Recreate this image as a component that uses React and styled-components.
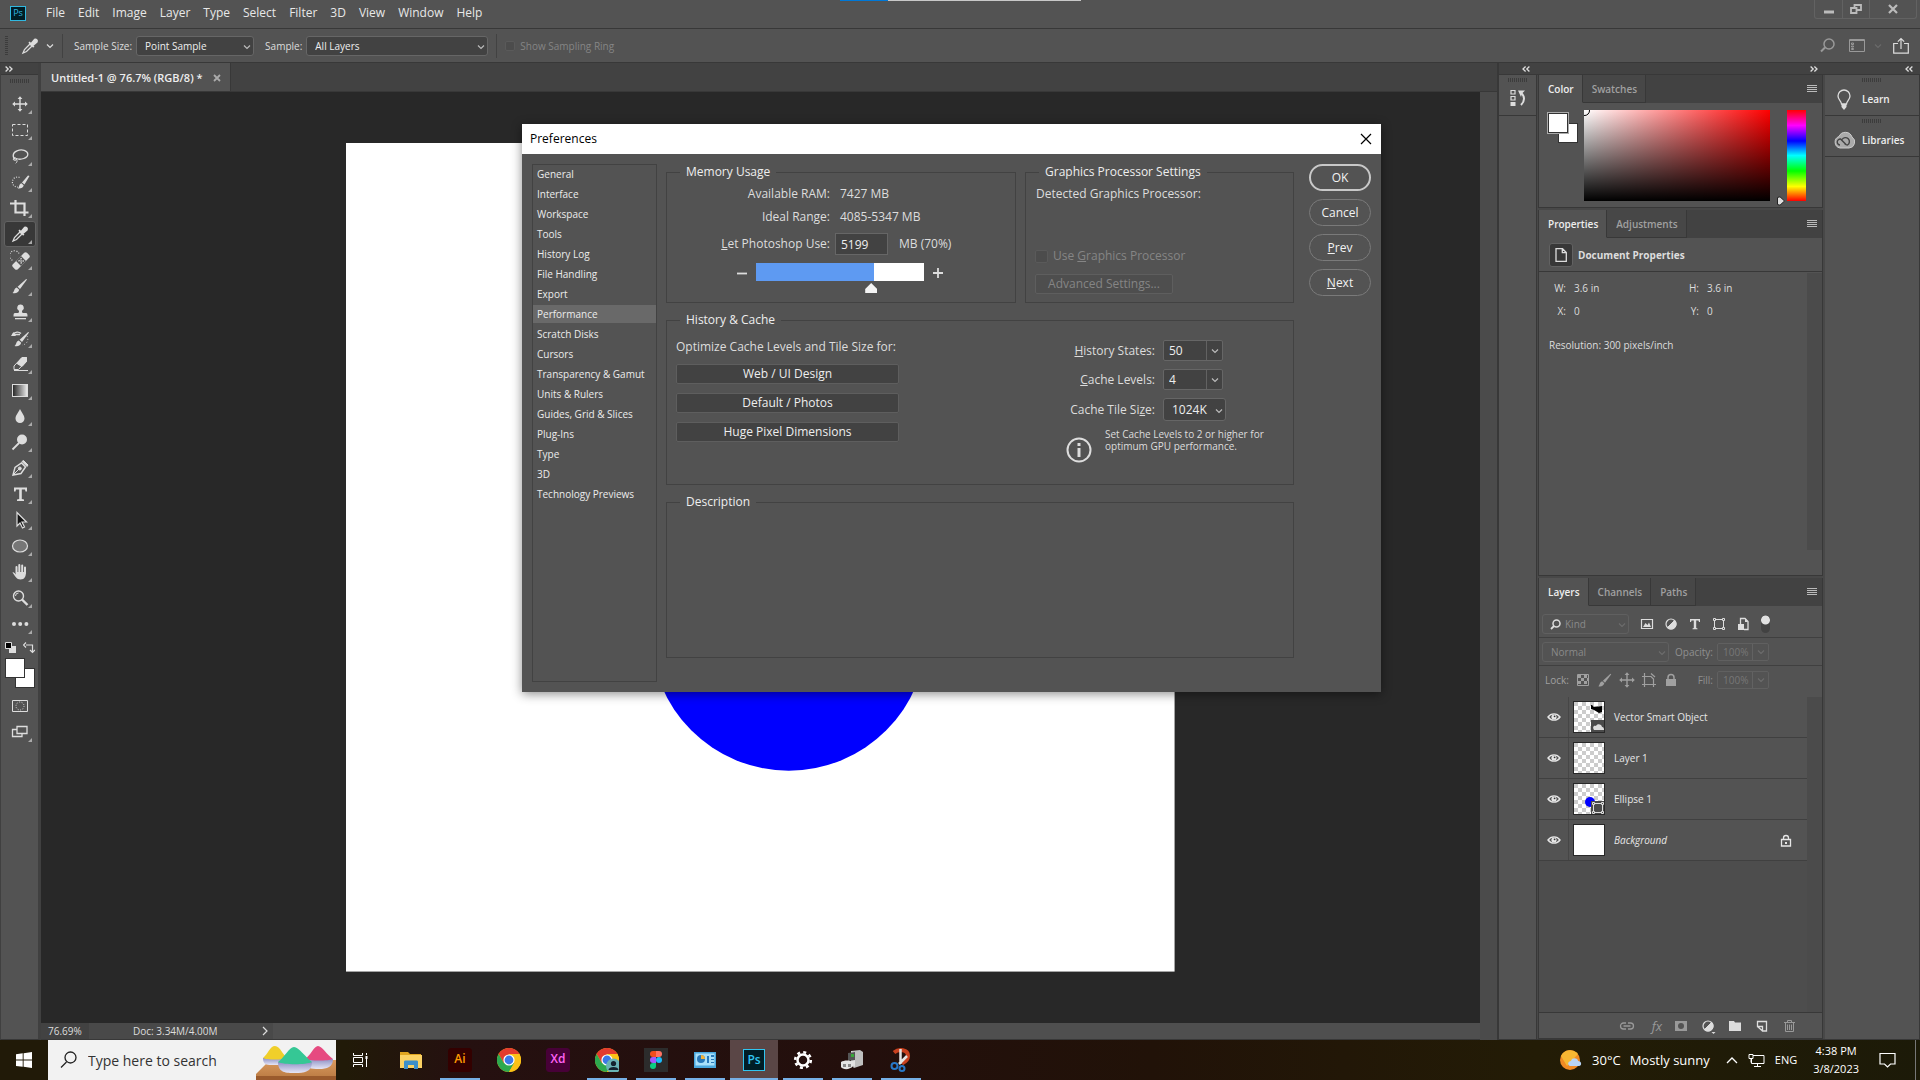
import React from "react";
import styled, { createGlobalStyle } from "styled-components";

const menus = ["File", "Edit", "Image", "Layer", "Type", "Select", "Filter", "3D", "View", "Window", "Help"];

const sections = [
  "General",
  "Interface",
  "Workspace",
  "Tools",
  "History Log",
  "File Handling",
  "Export",
  "Performance",
  "Scratch Disks",
  "Cursors",
  "Transparency & Gamut",
  "Units & Rulers",
  "Guides, Grid & Slices",
  "Plug-Ins",
  "Type",
  "3D",
  "Technology Previews",
];

const ram = 7427;

/* ---------- icons ---------- */

const Icon = ({ w = 20, h, box, children, label }) => (
  <svg
    width={w}
    height={h || w}
    viewBox={box || `0 0 ${w} ${h || w}`}
    fill="none"
    stroke="currentColor"
    aria-label={label}
    aria-hidden={label ? undefined : true}
  >
    {children}
  </svg>
);

const Chevron = () => (
  <Icon w={8} h={6}>
    <path d="M1 1.500 4 4.500 7 1.500" strokeWidth="1.200" />
  </Icon>
);

const Arrows = ({ left }) => (
  <Icon w={8} h={6}>
    {left ? (
      <path d="M3.600 .5 1 3 3.600 5.500M7.400 .5 4.800 3 7.400 5.500" strokeWidth="1.300" />
    ) : (
      <path d="M.6 .5 3.200 3 .6 5.500M4.400 .5 7 3 4.400 5.500" strokeWidth="1.300" />
    )}
  </Icon>
);

const Lines = () => (
  <Icon w={10} h={8}>
    <path d="M0 .5h10M0 2.500h10M0 4.500h10M0 6.500h10" />
  </Icon>
);

const Dropper = () => (
  <>
    <path d="M3 17 4.500 13.500 10 8l2 2-5.500 5.500z" strokeWidth="1.300" />
    <path d="M9 6.200 13.800 11M11 8l3.600-4.400a1.700 1.700 0 0 1 2.200 2.400L12.500 9.500" fill="currentColor" strokeWidth="1.800" />
  </>
);

const BrushPath = () => (
  <g fill="currentColor" stroke="none">
    <path d="M17 3.500 10 13 7.600 10.800 16.200 3z" />
    <path d="M6.800 11.500 9.200 13.700c-.6 2.800-3.200 4-6.700 3.300 2-1.200 1.300-4.600 4.300-5.500z" />
  </g>
);

const MovePath = () => (
  <>
    <path d="M10 4v12M4 10h12" strokeWidth="1.400" />
    <path d="M10 2.200 7.600 5h4.800zM10 17.800 7.600 15h4.800zM2.200 10 5 7.600v4.800zM17.800 10 15 7.600v4.800z" fill="currentColor" stroke="none" />
  </>
);

const ShapePath = () => (
  <>
    <path d="M5 3.500h6M5 12.500h6M3.500 5v6M12.500 5v6" />
    <path d="M2.500 2.500h2v2h-2zM11.500 2.500h2v2h-2zM2.500 11.500h2v2h-2zM11.500 11.500h2v2h-2z" />
  </>
);

const HalfCircle = () => (
  <>
    <circle cx="8" cy="8" r="5" strokeWidth="1.200" />
    <path d="M11.600 4.400A5 5 0 0 1 4.400 11.600z" fill="currentColor" />
  </>
);

const tools = [
  ["Move", <MovePath />],
  ["Marquee", <path d="M2.500 4.500h15v11h-15z" strokeDasharray="3 2" />],
  [
    "Lasso",
    <>
      <path d="M5.500 13.500C2 11 2.500 6.500 7 4.800c5-2 10.500-.3 10.800 3.200.3 4-7 6.500-11.800 4.500" strokeWidth="1.300" />
      <path d="M3 12.500c1.500-1.500 4-.5 3.500 1S3 14.500 3.200 13M6.500 13.500c1.200 1.500.2 3-.8 3.800" />
    </>,
  ],
  [
    "Quick Selection",
    <>
      <path d="M9.500 5.500A5 5 0 1 0 8 15" strokeDasharray="1 1.500" strokeWidth="1.200" />
      <path d="M19.500 4 14.500 12.500 12 10.500 18 3.500zM11.300 11.200l2.400 2.100c-.5 2.500-3 3.700-6 3.200 1.800-1 1.100-4.400 3.600-5.300z" fill="currentColor" stroke="none" />
    </>,
  ],
  ["Crop", <path d="M0 5.500h14.500V18M5.500 2v12.500H18.500" strokeWidth="2.200" />],
  ["Eyedropper", <Dropper />],
  [
    "Healing Brush",
    <>
      <path d="M9 3.500A5 5 0 1 0 3 10.500" strokeDasharray="1 1.500" strokeWidth="1.200" />
      <g transform="rotate(-45 11 11)">
        <rect x="1" y="7.500" width="20" height="7" rx="2" fill="currentColor" stroke="none" />
        <rect x="7.500" y="7.500" width="7" height="7" fill="#535353" stroke="none" />
        <path d="M9 9.500h1.500M11.800 9.500h1.500M9 12.500h1.500M11.800 12.500h1.500M10.300 11h1.500" strokeWidth="1.300" />
      </g>
    </>,
  ],
  ["Brush", <BrushPath />],
  [
    "Clone Stamp",
    <g fill="currentColor" stroke="none">
      <path d="M10.500 2.500a3.200 3.200 0 0 1 2 5.800c-.8.800-.7 2 .2 2.700h3.300c1.200 0 1.500.8 1.500 3.500h-14c0-2.700.3-3.500 1.500-3.500h3.300c.9-.7 1-1.900.2-2.700a3.200 3.200 0 0 1 2-5.800z" />
      <path d="M5 16h11v1.300H5z" />
    </g>,
  ],
  [
    "History Brush",
    <>
      <g transform="translate(2 1)">
        <BrushPath />
      </g>
      <path d="M2 6.500h8M3 6.500C5 3.500 9 3.500 11 5.500" strokeWidth="1.300" />
      <path d="M1 8 3.500 4 6 8z" fill="currentColor" stroke="none" />
      <path d="M17 8a6 6 0 0 1-5 9" strokeDasharray="1 2" />
    </>,
  ],
  [
    "Eraser",
    <>
      <path d="m4 12 8-8.500h4.500v3.500l-8 8.500H4z" />
      <path d="m7 9.500 5-6h4.500v4L12 12.500z" fill="currentColor" />
      <path d="M4 16.500h14" />
    </>,
  ],
  [
    "Gradient",
    <>
      <defs>
        <linearGradient id="toolGradient">
          <stop offset="0" stopColor="#222" />
          <stop offset="1" stopColor="#eee" />
        </linearGradient>
      </defs>
      <rect x="2.500" y="4.500" width="15" height="12" fill="url(#toolGradient)" />
    </>,
  ],
  ["Blur", <path d="M10 3c2 4 4.500 6.500 4.500 9.500a4.500 4.500 0 0 1-9 0C5.500 9.500 8 7 10 3z" fill="currentColor" stroke="none" />],
  [
    "Dodge",
    <>
      <circle cx="12" cy="7.500" r="5" fill="currentColor" stroke="none" />
      <path d="M9 11 2.500 17.500" strokeWidth="1.800" />
    </>,
  ],
  [
    "Pen",
    <>
      <path d="M3 17 5 9.500 11.500 5l4 4L11 15.500z" strokeWidth="1.400" />
      <path d="m3 17 6.500-6.500" />
      <circle cx="9.800" cy="10.500" r="1.500" fill="currentColor" />
      <path d="m12 3.500 5 5 1-1.500-4.500-4.500z" fill="currentColor" />
    </>,
  ],
  [
    "Type",
    <path d="M4 3.500h13v4h-1.500l-.5-2h-3.200v9.500l2.200.5V17H7v-1.500l2.200-.5V5.500H6l-.5 2H4z" fill="currentColor" stroke="none" />,
  ],
  ["Path Selection", <path d="M7 2.500v13.500l3-3 2.500 5 2-1-2.500-5h4.500z" fill="#151515" strokeWidth="1.200" />],
  ["Ellipse", <ellipse cx="10" cy="10" rx="7.500" ry="6" fill="#777" strokeWidth="1.200" />],
  [
    "Hand",
    <g strokeLinecap="round">
      <path d="M6.500 11V5M9.300 10V3M12.200 10V3.500M15 11V5.500" strokeWidth="2" />
      <path d="M2.500 10.500c1-.8 2 .2 3.500 2V10h10c0 4-1.200 7.500-5.500 7.500-4 0-5.500-3.500-8-7z" fill="currentColor" stroke="none" />
    </g>,
  ],
  [
    "Zoom",
    <>
      <circle cx="8.500" cy="8" r="5" strokeWidth="1.400" />
      <path d="M5.500 8a3 3 0 0 1 3-3" />
      <path d="m12 11.500 5.500 5.500" strokeWidth="2.400" />
    </>,
  ],
  [
    "More",
    <g fill="currentColor" stroke="none">
      <circle cx="4" cy="10" r="2" />
      <circle cx="10.200" cy="10" r="2" />
      <circle cx="16.400" cy="10" r="2" />
    </g>,
  ],
];

const Chrome = () => (
  <g stroke="none">
    <circle cx="12" cy="12" r="12" fill="#fbc116" />
    <path d="M1.600 6A12 12 0 0 1 22.400 6H12l-5.200 9z" fill="#e33b2e" />
    <path d="M1.600 6A12 12 0 0 0 12 24l5.200-9H6.800z" fill="#2da94f" />
    <path d="M22.400 6H12v6l5.200 3L12 24A12 12 0 0 0 22.400 6z" fill="#fbc116" />
    <circle cx="12" cy="12" r="5.600" fill="#fff" />
    <circle cx="12" cy="12" r="4.400" fill="#3b78e7" />
  </g>
);

const tasks = [
  {
    name: "File Explorer",
    art: (
      <g stroke="none">
        <path d="M1 4h8l2 2h11v14H1z" fill="#e0a520" />
        <path d="M1 7h22v13H1z" fill="#fbd264" />
        <path d="M5 14c0-1 .5-1.500 1.500-1.500h11c1 0 1.500.5 1.500 1.500v7h-4v-4H9v4H5z" fill="#3d8fc9" />
      </g>
    ),
  },
  { name: "Illustrator", open: true, tile: "Ai", bg: "#330000", fg: "#ff9a00" },
  { name: "Chrome", art: <Chrome /> },
  { name: "XD", tile: "Xd", bg: "#470137", fg: "#ff61f6" },
  {
    name: "Chrome profile",
    open: true,
    art: (
      <>
        <Chrome />
        <g stroke="none">
          <circle cx="18.500" cy="18" r="7.500" fill="#69b3b5" />
          <circle cx="18.500" cy="15.500" r="2.600" fill="#14232e" />
          <path d="M13.500 22c0-4 10-4 10 0z" fill="#14232e" />
        </g>
      </>
    ),
  },
  {
    name: "Figma",
    open: true,
    art: (
      <g stroke="none">
        <path d="M0 0h24v24H0z" fill="#2c2c2c" />
        <path d="M12 3H9a3 3 0 0 0 0 6h3z" fill="#f24e1e" />
        <path d="M12 3h3a3 3 0 0 1 0 6h-3z" fill="#ff7262" />
        <path d="M12 9H9a3 3 0 0 0 0 6h3z" fill="#a259ff" />
        <circle cx="15" cy="12" r="3" fill="#1abcfe" />
        <path d="M12 15H9a3 3 0 1 0 3 3z" fill="#0acf83" />
      </g>
    ),
  },
  {
    name: "Control Panel",
    open: true,
    art: (
      <g stroke="none">
        <path d="M1 4h22v16H1z" fill="#4aa8de" />
        <path d="M2.500 5.500h19v12h-19z" fill="#a8e0fa" />
        <circle cx="8" cy="11" r="4" fill="#2878b8" />
        <path d="M8 11V7a4 4 0 0 1 4 4z" fill="#f4b43a" />
        <path d="M14 8h2v7h-2zM18 7h3v2h-3zM18 11h3v1h-3zM18 14h3v1h-3z" fill="#2878b8" />
      </g>
    ),
  },
  { name: "Photoshop", open: true, active: true, tile: "Ps", bg: "#001d26", fg: "#31c5f0", framed: true },
  {
    name: "Settings",
    open: true,
    art: (
      <g stroke="#fff">
        <circle cx="12" cy="12" r="5.500" strokeWidth="2.500" />
        <circle cx="12" cy="12" r="7.800" strokeWidth="2.600" strokeDasharray="3 3.126" />
      </g>
    ),
  },
  {
    name: "Device",
    open: true,
    art: (
      <g stroke="none">
        <path d="m11 3 9-1 3 2v13l-9 3-3-3z" fill="#bfbfbf" />
        <path d="m11 3 4 2v14l-4-3z" fill="#e2e2e2" />
        <path d="m8 5 7-1v8l-7 1z" fill="#555" />
        <path d="M11 6h3v3h-3z" fill="#38a838" />
        <path d="M1 14c3-2 9-2 12 0v4c-3 4-10 4-12 1z" fill="#e4e4e4" />
        <path d="M3 16h3v3H3zM8 16h3v3H8z" fill="#888" />
      </g>
    ),
  },
  {
    name: "Snipping Tool",
    open: true,
    art: (
      <>
        <path d="M5 4.500c5-4 14-3 14 3.500 0 4-3 6-6 7.500" stroke="#c8411f" strokeWidth="4" />
        <path d="M11.500 1v15M18 8l-8 8" stroke="#e4e4e4" strokeWidth="2.500" />
        <circle cx="5.500" cy="18" r="3" stroke="#2878c8" strokeWidth="2" />
        <circle cx="13" cy="20.500" r="2.500" stroke="#2878c8" strokeWidth="2" />
      </>
    ),
  },
];

const PsLogo = () => (
  <PsTile $bg="#001d26" $fg="#31b8e0">
    Ps
  </PsTile>
);

const Eye = () => (
  <Icon w={14} h={10}>
    <path d="M1 5C4 .8 10 .8 13 5 10 9.200 4 9.200 1 5z" strokeWidth="1.400" />
    <circle cx="7" cy="5" r="2.600" fill="currentColor" stroke="none" />
    <circle cx="7.600" cy="4.300" r=".9" fill="#333" stroke="none" />
  </Icon>
);

const layers = [
  {
    name: "Vector Smart Object",
    art: (
      <>
        <path d="M17 3h1l2 2 8-1v6l-3 1-5-3-3-1z" fill="#000" stroke="none" />
        <path d="M17 18h13v12H17z" fill="#4a4a4a" stroke="none" />
        <path d="M20 28c-2-3 0-5 2-4 1-3 6-2 6 1 2 0 2 2 2 3z" fill="#ddd" stroke="none" />
      </>
    ),
  },
  { name: "Layer 1" },
  {
    name: "Ellipse 1",
    art: (
      <>
        <circle cx="16" cy="18" r="5" fill="#00f" stroke="none" />
        <path d="M17 17h13v13H17z" fill="#4a4a4a" stroke="none" />
        <g transform="translate(16 16)" stroke="#ddd">
          <ShapePath />
        </g>
      </>
    ),
  },
  { name: "Background", plain: true },
];

/* ---------- parts ---------- */

function DropDown({ label, children, width, height, dim, hint, flat, pad }) {
  return (
    <SelectWrap $width={width} $height={height} $dim={dim} $flat={flat} $pad={pad}>
      {hint}
      <select aria-label={label} disabled={dim}>
        <option>{children}</option>
      </select>
      <Chevron />
    </SelectWrap>
  );
}

function TopBars() {
  return (
    <>
      <MenuBar>
        <PsLogo />
        <MenuList>
          {menus.map((m) => (
            <button key={m}>{m}</button>
          ))}
        </MenuList>
        <Notch />
        <WindowButtons>
          <button aria-label="Minimize">
            <Icon w={10} h={10}>
              <path d="M0 8h10" strokeWidth="3" />
            </Icon>
          </button>
          <button aria-label="Restore">
            <Icon w={12} h={10}>
              <path d="M4.500 5V1h6.500v5H7M1 4h5.500v5H1z" strokeWidth="1.800" />
            </Icon>
          </button>
          <button aria-label="Close">
            <Icon w={10} h={10}>
              <path d="m1 1 8 8M9 1 1 9" strokeWidth="2.200" />
            </Icon>
          </button>
        </WindowButtons>
      </MenuBar>
      <OptionsBar>
        <Grip $vertical />
        <OptionTool aria-label="Eyedropper options">
          <Icon>
            <Dropper />
          </Icon>
          <Chevron />
        </OptionTool>
        <OptionSet>
          <span>Sample Size:</span>
          <DropDown label="Sample Size" width="118px">
            Point Sample
          </DropDown>
        </OptionSet>
        <OptionSet>
          <span>Sample:</span>
          <DropDown label="Sample" width="182px">
            All Layers
          </DropDown>
        </OptionSet>
        <RingLabel>
          <input type="checkbox" disabled />
          Show Sampling Ring
        </RingLabel>
        <OptionActions>
          <Icon w={15}>
            <circle cx="9" cy="6" r="5" strokeWidth="1.500" />
            <path d="m5 9.500-4 4" strokeWidth="2" />
          </Icon>
          <Icon w={16} h={13}>
            <path d="M.5 .5h15v12H.5z" />
            <path d="M0 1.500h16M2.500 4h2v1.500h-2zM2.500 7h2v1h-2zM2.500 9.500h2v1h-2z" />
          </Icon>
          <Faint>
            <Chevron />
          </Faint>
          <Bright>
            <Icon w={16} h={17}>
              <path d="M5 6.500H.7v9.700h14.600V6.500H11M8 12V1.500M4.800 4.700 8 1.500l3.200 3.200" strokeWidth="1.200" />
            </Icon>
          </Bright>
        </OptionActions>
      </OptionsBar>
    </>
  );
}

function ToolBar() {
  return (
    <ToolColumn>
      <Strip $start>
        <Arrows />
      </Strip>
      <Grip />
      <ToolList>
        {tools.map(([name, art]) => (
          <Tool key={name} aria-label={name} $active={name === "Eyedropper"}>
            <Icon>{art}</Icon>
          </Tool>
        ))}
      </ToolList>
      <MiniRow>
        <Icon w={12}>
          <path d="M4 4h7v7H4z" fill="#ddd" stroke="none" />
          <path d="M.5 .5h6v6h-6z" fill="#000" />
        </Icon>
        <Icon w={12}>
          <path d="M3 3h6.500v7M3 .5.500 3 3 5.500M7 8l2.500 2.500L12 8" strokeWidth="1.200" />
        </Icon>
      </MiniRow>
      <Swatches $bare>
        <i />
        <i />
      </Swatches>
      <ToolList>
        <Tool aria-label="Quick Mask" $plain>
          <Icon>
            <path d="M2.500 4.500h15v11h-15z" />
            <circle cx="10" cy="10" r="4" strokeDasharray="1 1.500" />
          </Icon>
        </Tool>
        <Tool aria-label="Screen Mode">
          <Icon>
            <path d="M7 4.500h10v7H7zM7 7.500H2.500v7H12v-3" strokeWidth="1.300" />
          </Icon>
        </Tool>
      </ToolList>
    </ToolColumn>
  );
}

function Workspace() {
  return (
    <Document>
      <DocTabs>
        <DocTab>
          Untitled-1 @ 76.7% (RGB/8) *
          <Icon w={8} h={8}>
            <path d="m1 1 6 6M7 1 1 7" strokeWidth="1.800" />
          </Icon>
        </DocTab>
      </DocTabs>
      <Canvas>
        <Artboard viewBox="0 0 829 829" role="img" aria-label="Canvas">
          <rect width="829" height="829" fill="#fff" />
          <circle cx="443" cy="490" r="138" fill="#00f" />
        </Artboard>
      </Canvas>
      <ScrollTrack />
      <StatusBar>
        <span>76.69%</span>
        <DocSize>
          Doc: 3.34M/4.00M
          <Icon w={6} h={10}>
            <path d="m1 1 4 4-4 4" strokeWidth="1.200" />
          </Icon>
        </DocSize>
      </StatusBar>
    </Document>
  );
}

function Tabs({ names }) {
  return (
    <TabBar role="tablist">
      {names.map((n, i) => (
        <Tab key={n} role="tab" aria-selected={i === 0} $active={i === 0}>
          {n}
        </Tab>
      ))}
      <Lines />
    </TabBar>
  );
}

function Panels() {
  return (
    <PanelStack>
      <Panel $height="133px">
        <Tabs names={["Color", "Swatches"]} />
        <ColorBody>
          <Swatches>
            <i />
            <i />
          </Swatches>
          <Spectrum>
            <Icon w={6} h={6}>
              <path d="M0 5.500A5 5 0 0 0 5.500 0" stroke="#000" />
            </Icon>
          </Spectrum>
          <Hue>
            <Icon w={8} h={10}>
              <path d="M.5 1.500 3 .8 7.500 5 3 9.200.5 8.500z" fill="#ddd" stroke="#222" />
            </Icon>
          </Hue>
        </ColorBody>
      </Panel>
      <Panel $height="366px">
        <Tabs names={["Properties", "Adjustments"]} />
        <PropTitle>
          <PropIcon>
            <Icon w={12} h={14}>
              <path d="M1 .7h6.500L11.300 4.500v8.800H1zM7.300 .7v4h4" strokeWidth="1.300" />
            </Icon>
          </PropIcon>
          Document Properties
        </PropTitle>
        <PropBody>
          <PropGrid>
            <dt>W:</dt>
            <dd>3.6 in</dd>
            <dt>H:</dt>
            <dd>3.6 in</dd>
            <dt>X:</dt>
            <dd>0</dd>
            <dt>Y:</dt>
            <dd>0</dd>
          </PropGrid>
          <p>Resolution: 300 pixels/inch</p>
        </PropBody>
      </Panel>
      <Panel $grow>
        <Tabs names={["Layers", "Channels", "Paths"]} />
        <LayerFilters>
          <DropDown
            label="Filter kind"
            width="87px"
            flat
            dim
            pad="22px"
            hint={
              <Icon w={11} h={11}>
                <circle cx="6.500" cy="4.500" r="3.500" strokeWidth="1.500" />
                <path d="M4 7 1 10" strokeWidth="1.800" />
              </Icon>
            }
          >
            Kind
          </DropDown>
          <FilterIcons>
            <Icon w={16}>
              <path d="M2.500 3.500h11v9h-11z" strokeWidth="1.200" />
              <path d="m4 11 2.500-4 2 2L10 6.500 12 11z" fill="currentColor" stroke="none" />
            </Icon>
            <Icon w={16}>
              <HalfCircle />
            </Icon>
            <Icon w={16}>
              <path d="M3 3h10v3h-1l-.5-1.500H9.200V12l1.300.4v.9h-5v-.9l1.300-.4V4.500H4.500L4 6H3z" fill="currentColor" stroke="none" />
            </Icon>
            <Icon w={16}>
              <ShapePath />
            </Icon>
            <Icon w={16}>
              <path d="M5.500 8V2.500h4.500l3 3v8H9" strokeWidth="1.300" />
              <path d="M10 2v4h3M3 8h6v6H3z" fill="currentColor" stroke="none" />
            </Icon>
          </FilterIcons>
          <Toggle type="checkbox" aria-label="Filter layers" />
        </LayerFilters>
        <LayerBlend>
          <DropDown label="Blend mode" width="127px" flat dim>
            Normal
          </DropDown>
          <label htmlFor="opacity">Opacity:</label>
          <Combo $flat>
            <input id="opacity" defaultValue="100%" disabled />
            <button aria-label="Opacity slider">
              <Chevron />
            </button>
          </Combo>
        </LayerBlend>
        <LayerBlend $last>
          <LockSet>
            <span>Lock:</span>
            <Icon w={16}>
              <path d="M2.500 2.500h11v11h-11z" />
              <path d="M3 3h3v3H3zM9 3h3v3H9zM6 6h3v3H6zM12 6h1v3h-1zM3 9h3v3H3zM9 9h3v3H9z" fill="currentColor" stroke="none" />
            </Icon>
            <Icon w={16} box="1 2 18 16">
              <BrushPath />
            </Icon>
            <Icon w={16} box="2 2 16 16">
              <MovePath />
            </Icon>
            <Icon w={16}>
              <path d="M3.500 1v3M1 4.500h2M3.500 15v-2M1 12.500h2.500V4.500H10l2.500 2.500v5.500h-9M12.500 12.500V15M12.500 12.500H15M10 1.500l4 3.500" strokeWidth="1.200" />
            </Icon>
            <Icon w={16}>
              <path d="M3 7h10v7H3z" fill="currentColor" stroke="none" />
              <path d="M5 7V5.500a3 3 0 0 1 6 0V7" strokeWidth="1.500" />
            </Icon>
          </LockSet>
          <label htmlFor="fill">Fill:</label>
          <Combo $flat>
            <input id="fill" defaultValue="100%" disabled />
            <button aria-label="Fill slider">
              <Chevron />
            </button>
          </Combo>
        </LayerBlend>
        <LayerList>
          {layers.map((l) => (
            <LayerRow key={l.name}>
              <EyeButton aria-label="Toggle visibility">
                <Eye />
              </EyeButton>
              <Thumb $plain={l.plain}>
                <Icon w={30}>{l.art}</Icon>
              </Thumb>
              <LayerName $italic={l.plain}>{l.name}</LayerName>
              {l.plain && (
                <Icon w={12} h={13}>
                  <path d="M1.500 5.500h9v6.500h-9zM3.500 5.500V4a2.500 2.500 0 0 1 5 0v1.500" strokeWidth="1.300" />
                  <path d="M5 8h2v2H5z" fill="currentColor" stroke="none" />
                </Icon>
              )}
            </LayerRow>
          ))}
        </LayerList>
        <LayerFooter>
          <Icon w={16}>
            <path d="M7 5H4.500a3 3 0 0 0 0 6H7M9 5h2.500a3 3 0 0 1 0 6H9M4.500 8h7" strokeWidth="1.300" />
          </Icon>
          <Fx>fx</Fx>
          <Icon w={16}>
            <path d="M2 3h12v10H2zM8 5a3 3 0 1 0 0 6 3 3 0 0 0 0-6z" fill="currentColor" stroke="none" fillRule="evenodd" />
          </Icon>
          <Bright>
            <Icon w={16}>
              <HalfCircle />
              <path d="M11.500 14h4L13.500 16z" fill="currentColor" stroke="none" />
            </Icon>
          </Bright>
          <Bright>
            <Icon w={16}>
              <path d="M2 3h5l1 1.500h6V13H2z" fill="currentColor" stroke="none" />
            </Icon>
          </Bright>
          <Bright>
            <Icon w={16}>
              <path d="M3.500 8.500V3.500h9v9.500H8.500v-4.500zM3.500 8.500 8.500 13" strokeWidth="1.300" />
            </Icon>
          </Bright>
          <Icon w={16}>
            <path d="M3 4.500h11M6.500 4V2.500h4V4M4.500 5v8.500h8V5M6.500 6.500v5.500M8.500 6.500v5.500M10.500 6.500v5.500" />
          </Icon>
        </LayerFooter>
      </Panel>
    </PanelStack>
  );
}

function Dock() {
  return (
    <DockArea>
      <Strip>
        <Arrows left />
      </Strip>
      <Strip>
        <Arrows />
      </Strip>
      <Strip>
        <Arrows left />
      </Strip>
      <DockColumn>
        <DockItem aria-label="History">
          <Grip />
          <Icon w={16} h={18}>
            <path d="M1 1.500h4v3.500H1zM1 7.500h4v3.500H1z" strokeWidth="1.200" />
            <path d="M.5 13h5v4h-5zM8 1.500h7l-3 3-1 3.500z" fill="currentColor" stroke="none" />
            <path d="M11 4c4 3 4 8 0 12" strokeWidth="2" />
          </Icon>
        </DockItem>
      </DockColumn>
      <Panels />
      <DockColumn>
        <DockItem $wide>
          <Grip />
          <Icon w={22}>
            <path d="M8.500 15c0-3-3.500-4-3.500-8a6 6 0 0 1 12 0c0 4-3.500 5-3.500 8z" strokeWidth="1.300" />
            <path d="M8.500 15h5v3l-2.500 3-2.500-3z" fill="currentColor" stroke="none" />
          </Icon>
          Learn
        </DockItem>
        <DockItem $wide>
          <Grip />
          <Icon w={22}>
            <path d="M7 18a6 6 0 0 1-1-11.500A7 7 0 0 1 19 7a6 6 0 0 1-3 11z" fill="#aaa" stroke="#ccc" />
            <path d="M13 14.500 7.500 9A3 3 0 1 0 7 15M9 9.500a4 4 0 1 1 5.500 5.500c-1.500 0-2-.5-3-1.500" stroke="#444" strokeWidth="1.400" />
          </Icon>
          Libraries
        </DockItem>
      </DockColumn>
    </DockArea>
  );
}

function Preferences() {
  const [used, setUsed] = React.useState(5199);
  const stop = `${Math.round((used / ram) * 100)}%`;
  return (
    <Dialog role="dialog" aria-label="Preferences">
      <DialogTitle>
        Preferences
        <button aria-label="Close dialog">
          <Icon w={12}>
            <path d="m1 1 10 10M11 1 1 11" strokeWidth="1.200" />
          </Icon>
        </button>
      </DialogTitle>
      <DialogBody>
        <SectionList>
          {sections.map((s) => (
            <li key={s}>
              <SectionLink href="#" $active={s === "Performance"}>
                {s}
              </SectionLink>
            </li>
          ))}
        </SectionList>
        <Groups>
          <Group $height="139px">
            <legend>Memory Usage</legend>
            <MemoryGrid>
              <span>Available RAM:</span>
              <span>7427 MB</span>
              <span>Ideal Range:</span>
              <span>4085-5347 MB</span>
              <label htmlFor="ram">
                <u>L</u>et Photoshop Use:
              </label>
              <UseCell>
                <NumberBox id="ram" value={used} onChange={(e) => setUsed(e.target.value)} />
                MB (70%)
              </UseCell>
            </MemoryGrid>
            <SliderRow>
              <button aria-label="Less">
                <Icon w={10}>
                  <path d="M0 5.500h10" strokeWidth="1.800" />
                </Icon>
              </button>
              <MemorySlider
                type="range"
                aria-label="Memory"
                min="0"
                max={ram}
                value={used}
                onChange={(e) => setUsed(e.target.value)}
                style={{ "--stop": stop }}
              />
              <button aria-label="More">
                <Icon w={10}>
                  <path d="M0 5h10M5 0v10" strokeWidth="1.800" />
                </Icon>
              </button>
            </SliderRow>
          </Group>
          <Group $height="139px">
            <legend>Graphics Processor Settings</legend>
            <GpuBody>
              <span>Detected Graphics Processor:</span>
              <GpuCheck>
                <input type="checkbox" disabled />
                <span>
                  Use <u>G</u>raphics Processor
                </span>
              </GpuCheck>
              <FlatButton disabled $width="138px">
                Advanced Settings...
              </FlatButton>
            </GpuBody>
          </Group>
          <Group $height="173px" $wide>
            <legend>History &amp; Cache</legend>
            <CacheBody>
              <Presets>
                <span>Optimize Cache Levels and Tile Size for:</span>
                <FlatButton>Web / UI Design</FlatButton>
                <FlatButton>Default / Photos</FlatButton>
                <FlatButton>Huge Pixel Dimensions</FlatButton>
              </Presets>
              <CacheSide>
                <CacheFields>
                  <label htmlFor="states">
                    <u>H</u>istory States:
                  </label>
                  <Combo>
                    <input id="states" defaultValue="50" />
                    <button aria-label="History states slider">
                      <Chevron />
                    </button>
                  </Combo>
                  <label htmlFor="levels">
                    <u>C</u>ache Levels:
                  </label>
                  <Combo>
                    <input id="levels" defaultValue="4" />
                    <button aria-label="Cache levels slider">
                      <Chevron />
                    </button>
                  </Combo>
                  <span>
                    Cache Tile Si<u>z</u>e:
                  </span>
                  <DropDown label="Cache Tile Size" width="63px" height="23px">
                    1024K
                  </DropDown>
                </CacheFields>
                <Hint>
                  <Icon w={26}>
                    <circle cx="13" cy="13" r="11.500" strokeWidth="2" />
                    <path d="M13 11v9" strokeWidth="3" />
                    <path d="M13 6v3" strokeWidth="3" />
                  </Icon>
                  <span>
                    Set Cache Levels to 2 or higher for
                    <br />
                    optimum GPU performance.
                  </span>
                </Hint>
              </CacheSide>
            </CacheBody>
          </Group>
          <Group $height="164px" $wide>
            <legend>Description</legend>
          </Group>
        </Groups>
        <DialogButtons>
          <PillButton $primary>OK</PillButton>
          <PillButton>Cancel</PillButton>
          <PillButton>
            <u>P</u>rev
          </PillButton>
          <PillButton>
            <u>N</u>ext
          </PillButton>
        </DialogButtons>
      </DialogBody>
    </Dialog>
  );
}

function SearchArt() {
  return (
    <svg width="80" height="38" viewBox="0 0 80 38" aria-hidden="true">
      <defs>
        <linearGradient id="table" x2="0" y2="1">
          <stop offset="0" stopColor="#d99a5e" />
          <stop offset="1" stopColor="#b87840" />
        </linearGradient>
        <linearGradient id="bowl" x2="0" y2="1">
          <stop offset="0" stopColor="#8d90c4" />
          <stop offset="1" stopColor="#e6e6f6" />
        </linearGradient>
      </defs>
      <path d="M14 18h66v20H0v-6z" fill="url(#table)" />
      <path d="M0 34h80v4H0z" fill="#9a5a2c" />
      <path d="M7 16c0 8 5 7 12 7s12-1 12-7z" fill="url(#bowl)" />
      <path d="M7 16C12 12 14 4 19 4s8 9 12 12c-4 2-20 2-24 0z" fill="#f0cf2a" />
      <path d="M49 17c0 10 6 10 14 10s14-2 14-10z" fill="url(#bowl)" />
      <path d="M49 17C55 13 58 4 62 4s9 9 15 13c-5 2-23 2-28 0z" fill="#e64a80" />
      <path d="M22 20c0 11 8 11 17 11s17-1 17-11z" fill="url(#bowl)" />
      <path d="M22 20c7-5 11-15 16-15s11 10 18 15c-6 3-28 3-34 0z" fill="#35c795" />
    </svg>
  );
}

function TaskBar() {
  return (
    <TaskStrip>
      <StartButton aria-label="Start">
        <Icon w={16}>
          <path d="M0 2.200 6.700 1.300v6.300H0zM7.600 1.200 16 0v7.600H7.600zM0 8.500h6.700v6.300L0 13.900zM7.600 8.500H16V16l-8.400-1.200z" fill="#fff" stroke="none" />
        </Icon>
      </StartButton>
      <SearchBox>
        <Icon w={18}>
          <circle cx="10.500" cy="6.500" r="5.500" strokeWidth="1.300" />
          <path d="M6.500 11 1 16.500" strokeWidth="1.300" />
        </Icon>
        <input aria-label="Search" placeholder="Type here to search" />
        <SearchArt />
      </SearchBox>
      <StartButton aria-label="Task View">
        <Icon w={18}>
          <path d="M2.500 2v2.500h9V2M2.500 16v-2.500h9V16M2.500 6.500h9v5h-9zM15.500 2v2M15.500 8v8" stroke="#fff" />
          <path d="M14.500 5h2v3h-2z" fill="#fff" stroke="none" />
        </Icon>
      </StartButton>
      <TaskList>
        {tasks.map((t) => (
          <TaskButton key={t.name} aria-label={t.name} $open={t.open} $active={t.active}>
            {t.tile ? (
              <TaskTile $bg={t.bg} $fg={t.fg} $framed={t.framed}>
                {t.tile}
              </TaskTile>
            ) : (
              <Icon w={24} h={24}>
                {t.art}
              </Icon>
            )}
          </TaskButton>
        ))}
      </TaskList>
      <Tray>
        <Weather>
          <Icon w={24} h={22}>
            <circle cx="11" cy="11" r="10" fill="#f08a24" stroke="none" />
            <path d="M2 7a10 10 0 0 1 17-2L8 17z" fill="#f7b733" stroke="none" />
            <path d="M11 17c-3-1-2-5 1-5 1-4 7-3 7 0 4 0 4 5 1 5z" fill="#b9d4f5" stroke="none" />
          </Icon>
          <span>30°C</span>
          <span>Mostly sunny</span>
        </Weather>
        <Icon w={12} h={8}>
          <path d="m1 7 5-5 5 5" strokeWidth="1.300" />
        </Icon>
        <Icon w={17} h={14}>
          <path d="M5 2.500h11v8H3.500V6M9.500 11v2.500M6 13.500h7M1 1.500h4v4H1zM3 5.500v4" />
        </Icon>
        <span>ENG</span>
        <Clock>
          4:38 PM
          <br />
          3/8/2023
        </Clock>
        <Icon w={17} h={16}>
          <path d="M1 1.500h15v10.500h-4.500l-3 3-3-3H1z" strokeWidth="1.200" />
        </Icon>
        <ShowDesktop />
      </Tray>
    </TaskStrip>
  );
}

export default function App() {
  return (
    <>
      <GlobalStyle />
      <Screen>
        <TopBars />
        <Main>
          <ToolBar />
          <Workspace />
          <Dock />
        </Main>
        <TaskBar />
        <Preferences />
      </Screen>
    </>
  );
}

/* ---------- styles ---------- */

const GlobalStyle = createGlobalStyle`
  * {
    box-sizing: border-box;
  }
  body {
    margin: 0;
    background: #535353;
    color: #ddd;
    font: 10px/14px "Open Sans", "Noto Sans", sans-serif;
  }
  button, input, select {
    margin: 0;
    padding: 0;
    border: 0;
    background: none;
    color: inherit;
    font: inherit;
  }
  svg {
    display: block;
    flex: none;
  }
`;

const Screen = styled.div`
  position: relative;
  display: flex;
  flex-direction: column;
  height: 100vh;
  overflow: hidden;
`;

const MenuBar = styled.header`
  position: relative;
  display: flex;
  align-items: center;
  height: 29px;
  padding: 0 0 2px 10px;
  border-bottom: 1px solid #383838;
  flex: none;
`;

const PsTile = styled.span`
  width: 16px;
  height: 15px;
  border: 1px solid ${(p) => p.$fg};
  background: ${(p) => p.$bg};
  color: ${(p) => p.$fg};
  font-size: 9px;
  line-height: 12px;
  text-align: center;
`;

const MenuList = styled.nav`
  display: flex;
  gap: 13px;
  margin-left: 20px;
  font-size: 12px;
  color: #e8e8e8;
`;

const Notch = styled.div`
  position: absolute;
  top: 0;
  left: 840px;
  width: 241px;
  height: 1px;
  background: linear-gradient(90deg, #0078d7 48px, #c8c8c8 48px);
`;

const WindowButtons = styled.div`
  display: flex;
  align-self: flex-start;
  height: 19px;
  margin-left: auto;
  margin-right: 3px;
  border: 1px solid #626262;
  border-top: 0;
  border-radius: 0 0 3px 3px;
  color: #bbb;
  button {
    width: 27px;
    display: grid;
    place-items: center;
  }
  button + button {
    border-left: 1px solid #626262;
  }
  button:last-child {
    width: 47px;
  }
`;

const OptionsBar = styled.div`
  display: flex;
  align-items: center;
  height: 34px;
  padding: 0 11px 0 5px;
  border-bottom: 1px solid #383838;
  flex: none;
`;

const Grip = styled.i`
  flex: none;
  width: ${(p) => (p.$vertical ? 3 : 20)}px;
  height: ${(p) => (p.$vertical ? 20 : 4)}px;
  background: repeating-linear-gradient(${(p) => (p.$vertical ? 180 : 90)}deg, #3c3c3c 0 1px, transparent 1px 2px);
`;

const OptionTool = styled.button`
  display: flex;
  align-items: center;
  gap: 6px;
  height: 24px;
  margin-left: 12px;
  padding-right: 8px;
  border-right: 1px solid #424242;
`;

const OptionSet = styled.div`
  display: flex;
  align-items: center;
  gap: 4px;
  margin-left: 11px;
`;

const SelectWrap = styled.span`
  position: relative;
  display: block;
  width: ${(p) => p.$width};
  height: ${(p) => p.$height || "20px"};
  color: ${(p) => (p.$dim ? "#8a8a8a" : "#eee")};
  select {
    appearance: none;
    width: 100%;
    height: 100%;
    padding-left: ${(p) => p.$pad || "8px"};
    border: 1px solid ${(p) => (p.$flat ? "#606060" : "#666")};
    border-radius: 3px;
    background: ${(p) => (p.$flat ? "transparent" : "#424242")};
    opacity: 1;
  }
  svg {
    position: absolute;
    right: 3px;
    top: calc(50% - 2px);
    color: ${(p) => (p.$dim ? "#6c6c6c" : "#bbb")};
    pointer-events: none;
  }
  svg:first-child:not(:last-child) {
    left: 8px;
    top: 5px;
    color: #ddd;
  }
`;

const checkbox = `
  appearance: none;
  width: 13px;
  height: 13px;
  border: 1px solid #5a5a5a;
  border-radius: 2px;
  background: #4c4c4c;
`;

const RingLabel = styled.label`
  display: flex;
  align-items: center;
  gap: 5px;
  height: 24px;
  margin-left: 8px;
  padding-left: 8px;
  border-left: 1px solid #424242;
  color: #858585;
  input {
    ${checkbox}
    width: 10px;
    height: 10px;
  }
`;

const OptionActions = styled.div`
  display: flex;
  align-items: center;
  gap: 14px;
  margin-left: auto;
  color: #999;
`;

const Faint = styled.span`
  color: #6a6a6a;
  margin: 0 -3px 0 -5px;
`;

const Bright = styled.span`
  color: #ddd;
`;

const Main = styled.main`
  display: flex;
  flex: 1;
  min-height: 0;
`;

const ToolColumn = styled.aside`
  display: flex;
  flex-direction: column;
  align-items: center;
  width: 41px;
  border-right: 3px solid #404040;
  border-left: 1px solid #404040;
  border-bottom: 1px solid #383838;
  color: #ddd;
  > i {
    margin: 4px 0 8px;
  }
`;

const Strip = styled.div`
  display: flex;
  align-items: center;
  justify-content: ${(p) => (p.$start ? "flex-start" : "flex-end")};
  align-self: stretch;
  height: 12px;
  padding: 0 7px 0 4px;
  background: #424242;
  border-bottom: 1px solid #383838;
`;

const ToolList = styled.div`
  display: flex;
  flex-direction: column;
`;

const Tool = styled.button`
  position: relative;
  display: grid;
  place-items: center;
  width: 32px;
  height: 26px;
  border: 1px solid ${(p) => (p.$active ? "#626262" : "transparent")};
  border-radius: 3px;
  background: ${(p) => (p.$active ? "#383838" : "none")};
  &::after {
    content: "";
    position: absolute;
    right: 3px;
    bottom: 2px;
    border: 2px solid transparent;
    border-right-color: ${(p) => (p.$plain ? "transparent" : "#aaa")};
    border-bottom-color: ${(p) => (p.$plain ? "transparent" : "#aaa")};
  }
`;

const MiniRow = styled.div`
  display: flex;
  gap: 6px;
  padding: 5px 0 4px;
`;

const Swatches = styled.div`
  display: grid;
  width: 30px;
  height: 30px;
  margin-bottom: ${(p) => (p.$bare ? "5px" : 0)};
  i {
    grid-area: 1 / 1;
    width: 20px;
    height: 20px;
    border: 1px solid #333;
    background: #fff;
  }
  i:first-child {
    z-index: 1;
    box-shadow: ${(p) => (p.$bare ? "none" : "0 0 0 1px #aaa")};
  }
  i:last-child {
    margin: 10px 0 0 10px;
  }
`;

const Document = styled.section`
  flex: 1;
  min-width: 0;
  display: grid;
  grid-template: 29px 1fr 17px / 1fr 17px;
  border-right: 2px solid #383838;
`;

const DocTabs = styled.div`
  grid-column: 1 / -1;
  background: #424242;
  border-bottom: 1px solid #383838;
`;

const DocTab = styled.div`
  display: inline-flex;
  align-items: center;
  gap: 10px;
  height: 28px;
  padding: 1px 9px 0 10px;
  background: #535353;
  border-right: 1px solid #383838;
  color: #eee;
  font-weight: 600;
  font-size: 11px;
  svg {
    color: #aaa;
  }
`;

const Canvas = styled.div`
  display: grid;
  place-items: center;
  min-height: 0;
  background: #282828;
`;

const Artboard = styled.svg`
  height: 89%;
`;

const ScrollTrack = styled.div`
  background: #4b4b4b;
  grid-row: 2 / 4;
  grid-column: 2;
`;

const StatusBar = styled.footer`
  display: flex;
  border-bottom: 1px solid #383838;
  background: #4f4f4f;
  line-height: 16px;
  > span:first-child {
    width: 48px;
    padding-left: 7px;
    background: #424242;
  }
`;

const DocSize = styled.span`
  display: flex;
  align-items: center;
  justify-content: space-between;
  width: 184px;
  padding: 0 5px 0 44px;
  background: #494949;
`;

const DockArea = styled.div`
  display: grid;
  grid-template: 12px 1fr / 38px 288px 95px;
  min-height: 0;
  border-bottom: 1px solid #383838;
`;

const DockColumn = styled.aside`
  display: flex;
  flex-direction: column;
  border-right: 1px solid #383838;
`;

const DockItem = styled.button`
  display: flex;
  flex-wrap: wrap;
  align-items: center;
  align-content: flex-start;
  justify-content: ${(p) => (p.$wide ? "flex-start" : "center")};
  column-gap: 7px;
  height: 41px;
  padding: 3px 8px 0;
  border-bottom: 1px solid #383838;
  color: #eee;
  font-weight: 600;
  svg {
    margin-top: 3px;
    color: #ddd;
  }
  > i {
    margin: 0 ${(p) => (p.$wide ? 29 : 0)}px 4px;
  }
`;

const PanelStack = styled.div`
  display: flex;
  flex-direction: column;
  gap: 2px;
  min-height: 0;
  padding: 0 2px 0 1px;
  background: #484848;
`;

const Panel = styled.section`
  display: flex;
  flex-direction: column;
  flex: ${(p) => (p.$grow ? "1" : "none")};
  min-height: 0;
  height: ${(p) => p.$height || "auto"};
  border: 1px solid #383838;
  border-top: 0;
  background: #535353;
`;

const TabBar = styled.div`
  display: flex;
  flex: none;
  height: 28px;
  background: #424242;
  svg {
    margin: 10px 5px 0 auto;
    color: #bbb;
  }
`;

const Tab = styled.button`
  padding: 0 8px 0 9px;
  border-right: 1px solid #383838;
  border-bottom: 1px solid ${(p) => (p.$active ? "#535353" : "#383838")};
  background: ${(p) => (p.$active ? "#535353" : "#474747")};
  color: ${(p) => (p.$active ? "#eee" : "#a0a0a0")};
  font-weight: 600;
`;

const ColorBody = styled.div`
  display: flex;
  padding: 7px 16px 0 9px;
  > div:first-child {
    margin-top: 3px;
  }
`;

const Spectrum = styled.div`
  flex: 1;
  height: 91px;
  margin: 0 17px 0 6px;
  background: linear-gradient(0deg, #000, transparent), linear-gradient(90deg, #fff, #f00);
`;

const Hue = styled.div`
  position: relative;
  width: 19px;
  height: 91px;
  background: linear-gradient(#f00, #f0f 17%, #00f 34%, #0ff 50%, #0f0 67%, #ff0 84%, #f00);
  svg {
    position: absolute;
    left: -10px;
    bottom: -5px;
  }
`;

const PropTitle = styled.h2`
  display: flex;
  align-items: center;
  gap: 5px;
  height: 34px;
  margin: 0;
  padding: 0 10px;
  border-bottom: 1px solid #383838;
  font-size: 10px;
  font-weight: 700;
`;

const PropIcon = styled.span`
  display: grid;
  place-items: center;
  width: 24px;
  height: 24px;
  border: 1px solid #626262;
  border-radius: 3px;
  background: #383838;
`;

const PropBody = styled.div`
  height: 277px;
  margin-top: 1px;
  padding: 8px 0 0 10px;
  border-right: 15px solid #4b4b4b;
  p {
    margin: 20px 0 0;
  }
`;

const PropGrid = styled.dl`
  display: grid;
  grid-template-columns: 17px 100px 17px 1fr;
  gap: 9px 8px;
  margin: 0;
  dt {
    text-align: right;
  }
  dd {
    margin: 0;
  }
`;

const LayerFilters = styled.div`
  display: flex;
  align-items: center;
  height: 32px;
  padding: 5px 3px 0;
  border-bottom: 1px solid #404040;
`;

const FilterIcons = styled.div`
  display: flex;
  gap: 8px;
  margin-left: 10px;
`;

const Toggle = styled.input`
  appearance: none;
  width: 9px;
  height: 18px;
  margin-left: 10px;
  border-radius: 5px;
  background: radial-gradient(circle at 50% 5px, #e0e0e0 4px, #424242 5px);
`;

const LayerBlend = styled.div`
  display: flex;
  align-items: center;
  height: 28px;
  padding: 0 53px 0 3px;
  border-bottom: ${(p) => (p.$last ? "0" : "1px solid #404040")};
  color: #8f8f8f;
  flex: none;
  label {
    margin: 0 4px 0 auto;
  }
`;

const LockSet = styled.div`
  display: flex;
  align-items: center;
  gap: 6px;
  padding-left: 3px;
  color: #a0a0a0;
`;

const Combo = styled.span`
  display: flex;
  width: ${(p) => (p.$flat ? 52 : 60)}px;
  height: ${(p) => (p.$flat ? 18 : 21)}px;
  border: 1px solid ${(p) => (p.$flat ? "#606060" : "#666")};
  border-radius: 2px;
  background: ${(p) => (p.$flat ? "none" : "#424242")};
  color: ${(p) => (p.$flat ? "#777" : "#eee")};
  input {
    flex: 1;
    min-width: 0;
    padding-left: 5px;
  }
  button {
    display: grid;
    place-items: center;
    width: 16px;
    border-left: 1px solid #626262;
    color: ${(p) => (p.$flat ? "#6c6c6c" : "#bbb")};
  }
`;

const LayerList = styled.ul`
  flex: 1;
  margin: 3px 0 0;
  padding: 0;
  list-style: none;
  border-right: 15px solid #4b4b4b;
  background: #4d4d4d;
`;

const LayerRow = styled.li`
  display: flex;
  align-items: center;
  height: 41px;
  padding-right: 15px;
  border-bottom: 1px solid #404040;
  background: #535353;
  color: #e6e6e6;
`;

const EyeButton = styled.button`
  display: grid;
  place-items: center;
  width: 30px;
  height: 100%;
  border-right: 1px solid #464646;
`;

const Thumb = styled.div`
  margin: 0 9px 0 4px;
  border: 1px solid #282828;
  background: ${(p) => (p.$plain ? "#fff" : "repeating-conic-gradient(#fff 0 25%, #ccc 0 50%) 0 0 / 8px 8px")};
`;

const LayerName = styled.span`
  flex: 1;
  font-style: ${(p) => (p.$italic ? "italic" : "normal")};
`;

const LayerFooter = styled.div`
  display: flex;
  align-items: center;
  justify-content: flex-end;
  gap: 11px;
  height: 26px;
  padding-right: 25px;
  border-top: 1px solid #383838;
  color: #999;
`;

const Fx = styled.span`
  width: 16px;
  font-size: 13px;
  font-style: italic;
  text-align: right;
`;

/* preferences dialog */

const Dialog = styled.div`
  position: absolute;
  left: 522px;
  top: 124px;
  width: 859px;
  background: #535353;
  box-shadow: 0 2px 10px rgba(0, 0, 0, 0.45);
  font-size: 12px;
  line-height: 16px;
`;

const DialogTitle = styled.header`
  display: flex;
  align-items: center;
  justify-content: space-between;
  height: 30px;
  padding: 0 9px 0 8px;
  background: #fff;
  color: #000;
`;

const DialogBody = styled.div`
  display: flex;
  padding: 10px;
`;

const SectionList = styled.ul`
  width: 125px;
  height: 518px;
  margin: 0 9px 0 0;
  padding: 0;
  border: 1px solid #424242;
  list-style: none;
  font-size: 10px;
`;

const SectionLink = styled.a`
  display: block;
  height: 18px;
  margin-bottom: 2px;
  padding-left: 4px;
  background: ${(p) => (p.$active ? "#696969" : "none")};
  color: #ececec;
  line-height: 18px;
  text-decoration: none;
`;

const Groups = styled.div`
  display: grid;
  grid-template-columns: 350px 1fr;
  align-content: start;
  gap: 9px;
  flex: 1;
`;

const Group = styled.fieldset`
  grid-column: ${(p) => (p.$wide ? "1 / -1" : "auto")};
  height: ${(p) => p.$height};
  min-width: 0;
  margin: 0;
  padding: 0;
  border: 1px solid #424242;
  legend {
    margin-left: 13px;
    padding: 0 6px;
    color: #eee;
  }
`;

const MemoryGrid = styled.div`
  display: grid;
  grid-template-columns: 163px 1fr;
  grid-template-rows: 22px 24px 30px;
  column-gap: 10px;
  align-items: center;
  margin-top: 3px;
  > :nth-child(odd) {
    text-align: right;
  }
`;

const UseCell = styled.div`
  display: flex;
  align-items: center;
  gap: 11px;
  margin-left: -5px;
`;

const NumberBox = styled.input`
  width: 53px;
  height: 22px;
  padding-left: 5px;
  border: 1px solid #666;
  background: #424242;
  color: #eee;
`;

const SliderRow = styled.div`
  display: flex;
  gap: 9px;
  margin: 4px 0 0 70px;
  button {
    height: 20px;
  }
`;

const MemorySlider = styled.input`
  appearance: none;
  width: 168px;
  height: 32px;
  &::-webkit-slider-runnable-track {
    height: 32px;
    background: linear-gradient(90deg, #5e9af2 var(--stop), #fff var(--stop)) top / 100% 18px no-repeat;
  }
  &::-webkit-slider-thumb {
    appearance: none;
    width: 12px;
    height: 10px;
    margin-top: 20px;
    background: #f4f4f4;
    clip-path: polygon(50% 0, 100% 60%, 100% 100%, 0 100%, 0 60%);
  }
`;

const GpuBody = styled.div`
  display: flex;
  flex-direction: column;
  align-items: flex-start;
  padding: 6px 9px;
  > span {
    margin: 0 0 46px 1px;
  }
`;

const GpuCheck = styled.label`
  display: flex;
  align-items: center;
  gap: 5px;
  margin-bottom: 10px;
  color: #858585;
  input {
    ${checkbox}
  }
`;

const FlatButton = styled.button`
  width: ${(p) => p.$width || "223px"};
  height: 20px;
  border: 1px solid #5e5e5e;
  border-radius: 2px;
  background: #424242;
  color: #eee;
  line-height: 16px;
  &:disabled {
    background: #4e4e4e;
    color: #858585;
  }
`;

const CacheBody = styled.div`
  display: flex;
  justify-content: space-between;
  padding: 11px 30px 0 9px;
`;

const Presets = styled.div`
  display: flex;
  flex-direction: column;
  gap: 9px;
`;

const CacheSide = styled.div`
  width: 228px;
`;

const CacheFields = styled.div`
  display: grid;
  grid-template-columns: 120px 1fr;
  gap: 8px;
  align-items: center;
  text-align: right;
  margin-top: 1px;
`;

const Hint = styled.div`
  display: flex;
  gap: 13px;
  margin: 7px 0 0 31px;
  font-size: 10px;
  line-height: 12px;
  white-space: nowrap;
  svg {
    margin-top: 9px;
  }
`;

const DialogButtons = styled.div`
  display: flex;
  flex-direction: column;
  gap: 8px;
  margin-left: 15px;
`;

const PillButton = styled.button`
  width: 62px;
  height: 27px;
  border: ${(p) => (p.$primary ? "2px solid #c8c8c8" : "1px solid #7a7a7a")};
  border-radius: 14px;
  color: #f2f2f2;
`;

/* windows task bar */

const TaskStrip = styled.footer`
  display: flex;
  height: 40px;
  flex: none;
  background: linear-gradient(90deg, #211a08 0 18%, #251010 24%, #230f0c 45%, #211208 60%, #231c06 80%, #1c1a08);
`;

const StartButton = styled.button`
  display: grid;
  place-items: center;
  width: 48px;
`;

const SearchBox = styled.label`
  display: flex;
  align-items: center;
  width: 288px;
  padding-left: 12px;
  background: #f2f2f2;
  color: #222;
  font-size: 14px;
  input {
    flex: 1;
    min-width: 0;
    padding-left: 10px;
    outline: 0;
  }
  input::placeholder {
    color: #333;
  }
  svg:last-child {
    align-self: flex-end;
  }
`;

const TaskList = styled.div`
  display: flex;
  gap: 1px;
  margin-left: 3px;
`;

const TaskButton = styled.button`
  display: grid;
  place-items: center;
  width: 48px;
  background: ${(p) => (p.$open ? "linear-gradient(#76b0e6, #76b0e6)" : "none")} bottom / ${(p) => (p.$active ? "48px" : "40px")} 2px
    no-repeat ${(p) => (p.$active ? "#5a4646" : "transparent")};
`;

const TaskTile = styled(PsTile)`
  width: ${(p) => (p.$framed ? 22 : 24)}px;
  height: ${(p) => (p.$framed ? 22 : 24)}px;
  border-color: ${(p) => (p.$framed ? p.$fg : p.$bg)};
  border-radius: ${(p) => (p.$framed ? 0 : 3)}px;
  font-size: 12px;
  font-weight: 600;
  line-height: 20px;
`;

const Tray = styled.div`
  display: flex;
  align-items: center;
  gap: 10px;
  margin-left: auto;
  color: #fff;
  font-size: 11px;
`;

const Weather = styled.div`
  display: flex;
  align-items: center;
  gap: 9px;
  margin-right: 6px;
  font-size: 13px;
`;

const Clock = styled.time`
  margin: 0 10px 0 6px;
  text-align: center;
  line-height: 18px;
`;

const ShowDesktop = styled.span`
  width: 5px;
  height: 40px;
  margin-left: 9px;
  border-left: 1px solid #777;
`;
